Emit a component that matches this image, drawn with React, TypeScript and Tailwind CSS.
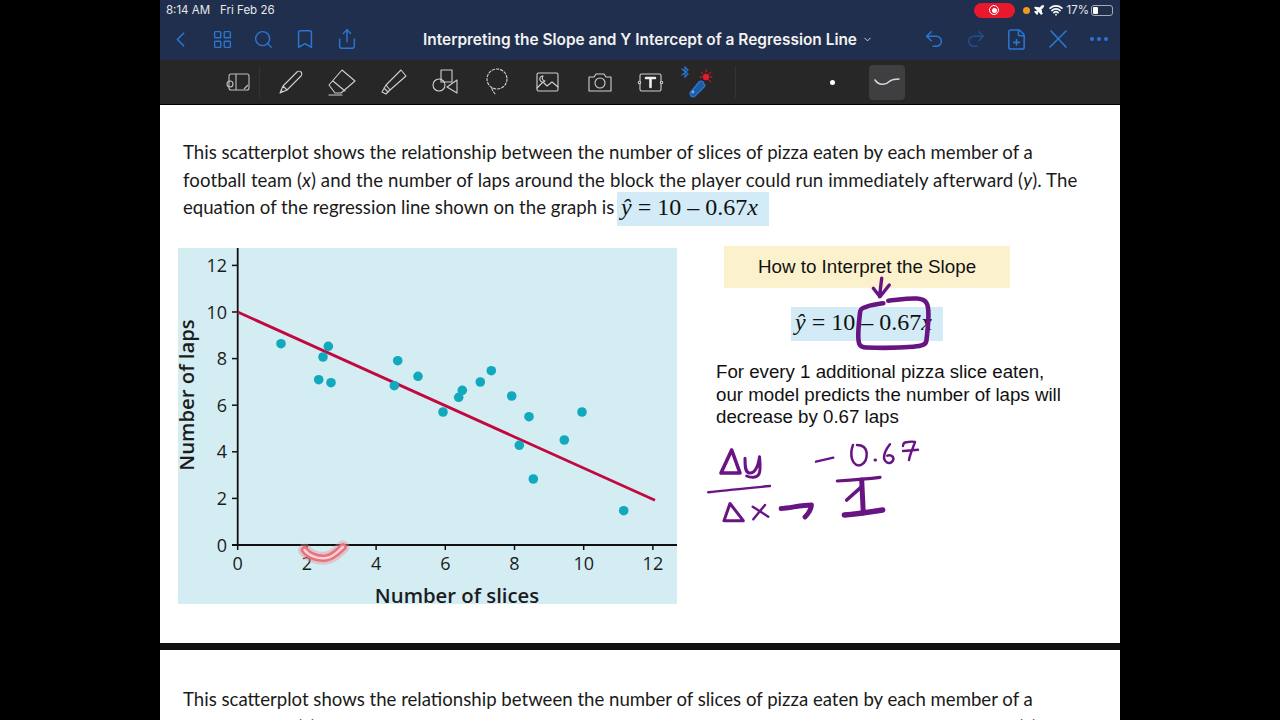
import { Bookmark, ChevronDown, ChevronLeft, FilePlus, LayoutGrid, Plane, Redo2, Search, Share, Undo2, Wifi } from 'lucide-react';

// Puntos del diagrama de dispersión, en coordenadas del recuadro (499x356)
const dots: [number, number][] = [
  [103, 95.7], [150.3, 98.3], [145, 109], [140.7, 131.7], [153, 134.7], [219.7, 112.7], [216.3, 137.7], [240, 128.3],
  [265, 164], [280.7, 149.3], [284.3, 142.3], [302.3, 134], [313.3, 122.7], [333.7, 148], [351, 168.7], [341.3, 197.3],
  [386.3, 192], [404, 164], [355.3, 231], [445.7, 262.7],
];

const xTicks = [0, 2, 4, 6, 8, 10, 12];
const yTicks = [0, 2, 4, 6, 8, 10, 12];

const ToolIcon = ({ children, w = 28, h = 28 }: { children: React.ReactNode; w?: number; h?: number }) => (
  <div className="w-[51.5px] flex items-center justify-center">
    <svg width={w} height={h} viewBox={`0 0 ${w} ${h}`} fill="none" stroke="#d0d0d0" strokeWidth="1.1" strokeLinejoin="round" strokeLinecap="round">
      {children}
    </svg>
  </div>
);

const NavCell = ({ children }: { children: React.ReactNode }) => (
  <div className="w-[41.5px] flex items-center justify-center text-[#2a76d2]">{children}</div>
);

const RightCell = ({ children }: { children: React.ReactNode }) => (
  <div className="w-[41.25px] flex items-center justify-center text-[#2a76d2]">{children}</div>
);

const Chart = () => (
  <div className="w-[499px] h-[356px] bg-[#d3edf3] shrink-0 overflow-hidden">
    <svg width="499" height="356" viewBox="0 0 499 356">
      <line x1="59.7" y1="0" x2="59.7" y2="297" stroke="#111" strokeWidth="1.8" />
      <line x1="54" y1="297" x2="499" y2="297" stroke="#111" strokeWidth="1.8" />
      {yTicks.map((t) => {
        const y = 297 - t * 23.3;
        return (
          <g key={t}>
            <line x1="54" y1={y} x2="59.7" y2={y} stroke="#111" strokeWidth="1.5" />
            <text x="49" y={y + 6.5} textAnchor="end" fontFamily="'Open Sans', sans-serif" fontSize="18" fill="#1c1c1c">{t}</text>
          </g>
        );
      })}
      {xTicks.map((t) => {
        const x = 59.7 + t * 34.6;
        return (
          <g key={t}>
            <line x1={x} y1="297" x2={x} y2="302" stroke="#111" strokeWidth="1.5" />
            <text x={x} y="322" textAnchor="middle" fontFamily="'Open Sans', sans-serif" fontSize="18" fill="#1c1c1c">{t}</text>
          </g>
        );
      })}
      <line x1="59.7" y1="64" x2="477" y2="252.3" stroke="#c2093f" strokeWidth="2.8" />
      {dots.map(([x, y]) => (
        <circle key={`${x}-${y}`} cx={x} cy={y} r="4.8" fill="#12a9bf" />
      ))}
      <text x="279" y="355" textAnchor="middle" fontFamily="'Open Sans', sans-serif" fontWeight="600" fontSize="20.3" fill="#1c1c1c">Number of slices</text>
      <text transform="translate(16 147) rotate(-90)" textAnchor="middle" fontFamily="'Open Sans', sans-serif" fontWeight="600" fontSize="20.3" fill="#1c1c1c">Number of laps</text>
    </svg>
  </div>
);

// Anotaciones a mano sobre la página, en coordenadas de pantalla
const Ink = () => (
  <svg className="absolute top-0 left-0 pointer-events-none" width="1280" height="720" viewBox="0 0 1280 720" fill="none" strokeLinecap="round" strokeLinejoin="round">
    <path d="M304.5 550 C309 556 318 559 326 558 C334 557 338 551 343 547" stroke="#ee8f98" strokeOpacity="0.4" strokeWidth="13" />
    <path d="M304.5 550 C309 556 318 559 326 558 C334 557 338 551 343 547" stroke="#e8737f" strokeWidth="7.5" />
    <path d="M304.5 550 C309 556 318 559 326 558 C334 557 338 551 343 547" stroke="#fbd2d4" strokeWidth="2.4" />
    <g stroke="#681483">
      <path d="M881.7 278.3 L879.5 296.7 M873.3 288.3 L880 296.7 L889.3 285" strokeWidth="3.4" />
      <path d="M883.3 303.3 C876 304.5 870 305 866.7 306.7 C861 308 860 310 860 313 C859 322 858 330 858.3 337 C858.5 345 860 347.3 866 347.5 C880 348 898 348 913.3 346.7 C922 346 926 345 926.5 340 C927.5 330 929 320 928.3 311 C928 302 925 299 916.7 298.5 C907 298 897 300 888.3 300.7" strokeWidth="4.6" />
      <path d="M731.7 450 L721 473 L740 473 Z" strokeWidth="3.6" />
      <path d="M745 458.3 C745 466 745 472 749 473 C754 474 758 468 759.5 456.7 C760 464 761 470 759 474 C757 478 751 478 746.7 476" strokeWidth="3" />
      <path d="M708.3 492.3 C728 490 750 488 770 486" strokeWidth="2.4" />
      <path d="M730 503.5 L724 520.7 L743.3 520.7 Z" strokeWidth="3" />
      <path d="M752.7 506.7 L768.3 516.7 M765 505 L753.3 519.3" strokeWidth="2.4" />
      <path d="M781 508.5 C790 508 802 505 811.5 505 C811 510 808 514 805 517" strokeWidth="4.8" />
      <path d="M816 461.7 L833.3 457.7" strokeWidth="2.4" />
      <path d="M853 445 C851 450 851 455 852 459 C854 465 858 466 861 465 C865 463 867 458 866.7 453 C866 447 862 445 857 445" strokeWidth="2.5" />
      <path d="M875 460 L875.5 460" strokeWidth="3" />
      <path d="M890 444.3 C886 449 884 454 884 458.3 C885 462 888 463.5 890 463 C893 462 894 459 893 457 C891 455 889 455 887.3 455.7" strokeWidth="2.5" />
      <path d="M903 446 C903 443 905 442 908 442 C911 441.5 913 441.5 915 442 C913 448 910 454 909 460 M903 451 C908 451 913 450 918 449.7" strokeWidth="2.4" />
      <path d="M837.3 481 C852 480 866 479 880 477.3" strokeWidth="3.2" />
      <path d="M861.7 480 L863.3 513" strokeWidth="5" />
      <path d="M846.7 500 L861.7 486.7" strokeWidth="3.6" />
      <path d="M844.3 515 C857 514 870 512 882.7 510" strokeWidth="5.4" />
    </g>
  </svg>
);

const Paragraph = () => (
  <p className="pl-[23px] pt-[34px] text-[18.6px] leading-[27.5px] text-[#1a1a1a] whitespace-nowrap [font-family:Lato,sans-serif]">
    This scatterplot shows the relationship between the number of slices of pizza eaten by each member of a<br />
    <span className="tracking-[0.1px]">football team (<i>x</i>) and the number of laps around the block the player could run immediately afterward (<i>y</i>). The</span><br />
    equation of the regression line shown on the graph is{' '}
    <span className="inline-block align-top w-[152px] h-[34px] -mt-[2px] -ml-[2px] pl-[4px] bg-[#d2ebf6] text-[24px] leading-[31px] text-[#111] [font-family:'Liberation_Serif',serif]">
      <i>ŷ</i> = 10 – 0.67<i>x</i>
    </span>
  </p>
);

export default function App() {
  return (
    <div className="relative w-[1280px] h-[720px] bg-black overflow-hidden flex justify-center">
      <div className="w-[960px] h-[720px] flex flex-col">
        {/* Barra de estado */}
        <div className="h-[21px] pb-[1px] bg-[#1f2f4d] flex items-center pl-[6px] pr-[7px] text-[11.5px] text-[#e8e8e8] [font-family:Inter,sans-serif]">
          <span className="pt-[1px]">8:14 AM</span>
          <span className="pt-[1px] ml-[10px]">Fri Feb 26</span>
          <div className="ml-auto w-[41px] h-[15px] rounded-full bg-[#e8192c] flex items-center justify-center">
            <div className="w-[10px] h-[10px] rounded-full border border-white flex items-center justify-center">
              <div className="w-[5px] h-[5px] rounded-full bg-white" />
            </div>
          </div>
          <div className="ml-[8px] w-[7px] h-[7px] rounded-full bg-[#f09a1c]" />
          <Plane size={12} className="ml-[3px] text-white fill-white" />
          <Wifi size={14} strokeWidth={3} className="ml-[4px] text-white" />
          <span className="pt-[1px] ml-[4px]">17%</span>
          <div className="ml-[2px] w-[22px] h-[11px] rounded-[3px] border border-[#aaa] p-[1px]">
            <div className="w-[5px] h-full rounded-[1px] bg-white" />
          </div>
        </div>

        {/* Barra de navegación */}
        <div className="h-[39px] pb-[3px] bg-[#1f2f4d] flex items-center">
          <NavCell><ChevronLeft size={25} strokeWidth={1.6} className="-ml-[1px]" /></NavCell>
          <NavCell><LayoutGrid size={21} strokeWidth={1.6} /></NavCell>
          <NavCell><Search size={21} strokeWidth={1.6} /></NavCell>
          <NavCell><Bookmark size={22} strokeWidth={1.6} /></NavCell>
          <NavCell><Share size={22} strokeWidth={1.6} /></NavCell>
          <div className="ml-[55.5px] mt-[2px] flex items-center text-[15.45px] font-semibold text-[#f2f2f2] whitespace-nowrap [font-family:Inter,sans-serif]">
            Interpreting the Slope and Y Intercept of a Regression Line
            <ChevronDown size={11} strokeWidth={2} className="ml-[5px] text-[#ddd]" />
          </div>
          <div className="ml-auto flex items-center">
            <RightCell><Undo2 size={22} strokeWidth={1.6} /></RightCell>
            <RightCell><Redo2 size={22} strokeWidth={1.6} className="text-[#1f4f8f]" /></RightCell>
            <RightCell><FilePlus size={23} strokeWidth={1.6} /></RightCell>
            <RightCell>
              <svg width="20" height="20" viewBox="0 0 20 20" fill="none" stroke="currentColor" strokeWidth="1.7" strokeLinecap="round">
                <path d="M3 2 L18 18 M2 18 L14 6 M15 5 L18 2" />
              </svg>
            </RightCell>
            <RightCell>
              <svg width="20" height="6" viewBox="0 0 20 6" fill="currentColor">
                <circle cx="3" cy="3" r="2" />
                <circle cx="10" cy="3" r="2" />
                <circle cx="17" cy="3" r="2" />
              </svg>
            </RightCell>
          </div>
        </div>

        {/* Barra de herramientas */}
        <div className="h-[45px] bg-[#272727] border-b border-black flex items-center pl-[66px]">
          <svg width="24" height="22" viewBox="0 0 24 22" fill="none" stroke="#c0c0c0" strokeWidth="1.1">
            <rect x="3" y="3" width="20" height="16" rx="2" />
            <path d="M10 3 V19 M1 13 a3 3 0 1 0 6 0 a3 3 0 1 0 -6 0 M18 18 L22 14" />
          </svg>
          <div className="ml-[9px] w-px h-[32px] bg-[#333]" />
          <div className="ml-[5px] flex items-center">
            <ToolIcon>
              <path d="M3 25 L6 18 L20 4 C21 3 23 3 24 4 C25 5 25 7 24 8 L10 22 Z M6 18 L10 22 M4 22 L6 24" />
            </ToolIcon>
            <ToolIcon>
              <path d="M1 17 L14 2 L27 13 L13 25 H7 Z M5 13 L17 23" />
              <path d="M1 27 H14" />
            </ToolIcon>
            <ToolIcon>
              <path d="M2 24 L6 26 L10 22 L26 8 L21 2 L6 17 Z M6 17 L10 22 M4 20 L8 24" />
            </ToolIcon>
            <ToolIcon>
              <rect x="10" y="2" width="11" height="12" />
              <circle cx="8" cy="17" r="6" />
              <path d="M26 12 V25 L16 19 Z" />
            </ToolIcon>
            <ToolIcon>
              <circle cx="14" cy="11" r="10" strokeDasharray="2.4 1.8" />
              <path d="M9 20 C9 23 11 24 12 26" strokeDasharray="2.4 1.8" />
            </ToolIcon>
            <ToolIcon>
              <rect x="3" y="5" width="21" height="18" rx="1.5" />
              <path d="M3 20 L9 14 L13 18 L18 14 L24 19 M9 8 a3 3 0 1 0 2 5 a3 3 0 0 1 -2 -5" />
            </ToolIcon>
            <ToolIcon>
              <path d="M3 9 H8 L10 6 H18 L20 9 H25 V23 H3 Z" />
              <circle cx="14" cy="15" r="5" />
            </ToolIcon>
            <ToolIcon>
              <rect x="3" y="6" width="21" height="17" rx="1.5" />
              <path d="M9 10 H18 M13.5 10 V19" strokeWidth="2.6" stroke="#eee" />
              <circle cx="2.5" cy="14.5" r="1.2" fill="#272727" />
              <circle cx="24.5" cy="14.5" r="1.2" fill="#272727" />
            </ToolIcon>
            <div className="w-[46px] flex items-center justify-center -ml-[3px]">
              <svg width="36" height="32" viewBox="0 0 36 32" fill="none" strokeLinecap="round">
                <path d="M3 3 L9 8 L6 11 L6 1 L9 4 L3 9" stroke="#2a76d2" strokeWidth="1.2" />
                <path d="M11 27 L20 16 C21 15 23 15 24 16 L25 18 C26 19 26 20 25 21 L16 30 C15 31 13 31 12 30 Z" stroke="#2a76d2" strokeWidth="1.4" fill="#1e5aa6" />
                <circle cx="14" cy="26" r="1.4" fill="#6bb0f0" />
                <circle cx="27" cy="11" r="3.2" fill="#e8192c" />
                <path d="M27 4 V6 M33 11 H31 M23 11 H21 M32 6 L30 8 M32 16 L30 14 M22 6 L24 8" stroke="#e8192c" strokeWidth="1" />
              </svg>
            </div>
            <div className="ml-[15px] w-px h-[32px] bg-[#333]" />
            <div className="ml-[94px] w-[5px] h-[5px] rounded-full bg-white" />
            <div className="ml-[34px] w-[36px] h-[35px] rounded-[4px] bg-[#3f3f41] flex items-center justify-center">
              <svg width="26" height="10" viewBox="0 0 26 10" fill="none">
                <path d="M1 3 C6 10 13 7 16 4 C19 2 22 2 25 2" stroke="#d8d8d8" strokeWidth="1.6" strokeLinecap="round" />
              </svg>
            </div>
          </div>
        </div>

        {/* Página 1 */}
        <div className="h-[538px] bg-white shrink-0">
          <Paragraph />
          <div className="flex pl-[18px] pt-[22px]">
            <Chart />
            <div className="-mt-[2px] ml-[39px]">
              <div className="ml-[8px] w-[286px] h-[42px] bg-[#fcf1cd] flex items-center justify-center text-[18.8px] text-[#111] [font-family:'Liberation_Sans',sans-serif]">
                How to Interpret the Slope
              </div>
              <div className="mt-[19px] ml-[75px] w-[152px] h-[34px] pl-[4px] bg-[#d2ebf6] text-[24px] leading-[30px] text-[#111] whitespace-nowrap [font-family:'Liberation_Serif',serif]">
                <i>ŷ</i> = 10 – 0.67<i>x</i>
              </div>
              <p className="mt-[20px] text-[18.7px] leading-[22.5px] text-[#111] whitespace-nowrap [font-family:'Liberation_Sans',sans-serif]">
                For every 1 additional pizza slice eaten,<br />
                our model predicts the number of laps will<br />
                decrease by 0.67 laps
              </p>
            </div>
          </div>
        </div>

        <div className="h-[7px] bg-[#111] shrink-0" />

        {/* Página 2 */}
        <div className="flex-1 bg-white overflow-hidden pt-[2px]">
          <Paragraph />
        </div>
      </div>
      <Ink />
    </div>
  );
}
